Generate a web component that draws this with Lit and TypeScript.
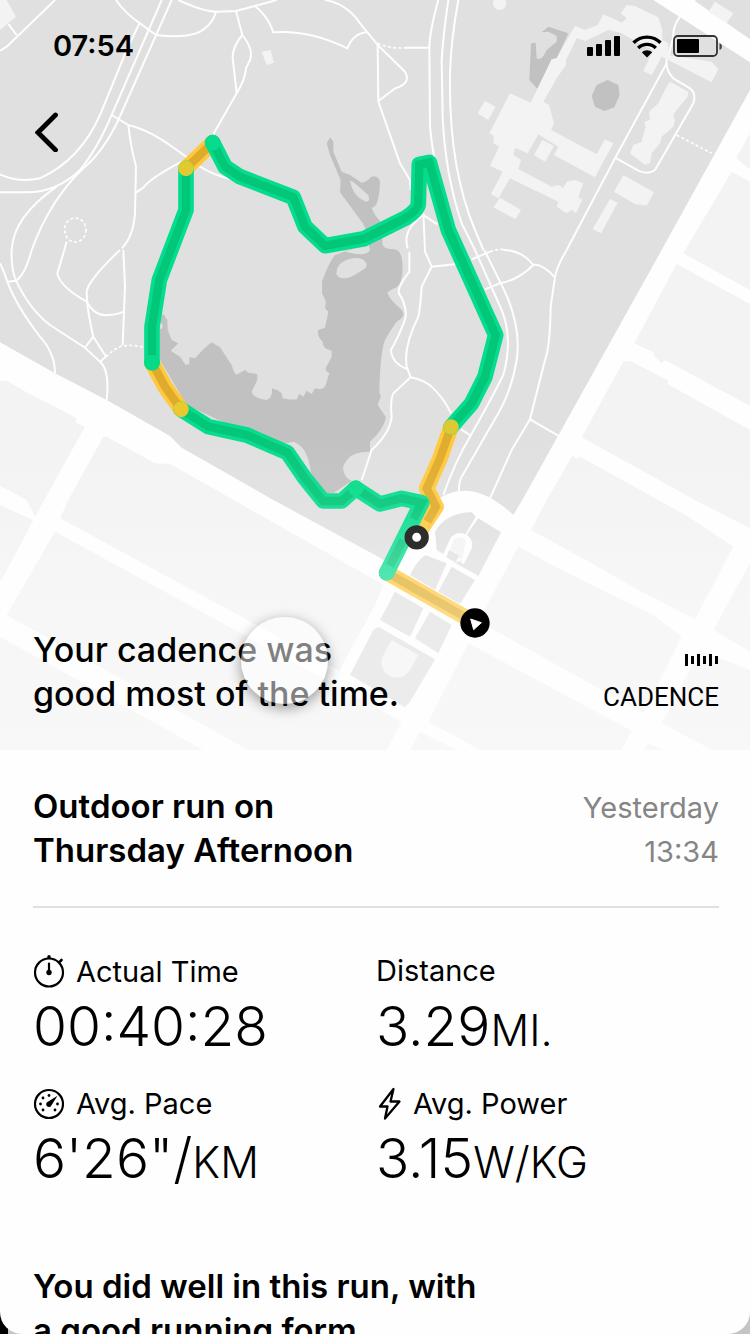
import { LitElement, html, svg, css } from "lit";
import { customElement } from "lit/decorators.js";

/* The map canvas is 2250 x 2250 units; sheets are grouped by their origin. */

const PARK =
  "M0 0H1960L2250 187V270L1985 750L1567 1500L1540 1545Q1465 1475 1400 1472Q1340 1470 1300 1510L1240 1620L1150 1680L1125 1665L820 1500L545 1343L510 1308L320 1200L165 1120L0 1027Z M2080 0L2250 118V0Z";

const BLOCKS = [
  "2208 475 2250 400 2250 507",
  "2195 515 2250 545 2250 870 2050 760",
  "2030 792 2250 912 2250 1218 1995 1080 1985 1090 1960 1065 1963 1058 1903 1030",
  "1870 1085 1890 1082 2005 1142 2003 1152 2250 1290 2250 1585 2085 1500 1745 1312",
  "1717 1368 1730 1376 1740 1370 1975 1500 2065 1550 2200 1640 2085 1858 1915 1770 1775 1690 1593 1590 1640 1500",
  "2250 1690 2140 1890 2250 1955",
  "1555 1640 1695 1715 1960 1845 2045 1910 1930 2140 1465 1880 1450 1835",
  "2250 2010 2100 1950 1985 2170 2250 2310",
  "1405 1930 1895 2192 1865 2250 1440 2250 1285 2165",
  "1260 2195 1370 2250 1230 2250",
  "1945 2230 1990 2250 1930 2250",
  "165 1595 275 1655 1125 2120 1205 2165 1160 2250 745 2250 20 1845",
  "0 1910 610 2250 0 2250",
  "320 1310 465 1390 510 1392 1125 1740 1150 1755 1125 1815 1018 2012 760 1870 180 1555 205 1500 310 1310",
  "0 1142 20 1142 85 1180 150 1212 230 1255 228 1268 255 1280 105 1550 80 1500 0 1457",
  "0 1515 100 1560 5 1740 0 1740",
];

const PLAZA = [
  "M185 150L180 95Q215 37 290 37L302 50L270 105L245 100L225 120L205 162Z",
  "M310 55L378 97L310 228L240 188L265 180L290 130L275 105Z",
  "M150 165L215 190L180 270L105 225Q120 190 150 165Z",
  "M230 200L300 240L255 312L190 275Z",
  "M60 275L145 325L105 410L15 360Z",
  "M165 335L230 375L190 460L120 415Z",
  "M10 380L180 478L105 605L90 622L-75 525L-5 390Z",
];

const LAKE =
  "M990 412L1000 425V455L1025 515L1050 525L1085 548Q1100 547 1112 532Q1130 522 1140 543Q1140 580 1130 612Q1124 622 1115 623Q1122 645 1142 665L1148 735Q1155 748 1175 747Q1202 745 1206 780Q1213 840 1190 862Q1170 870 1162 878Q1170 900 1200 925Q1225 945 1190 965Q1165 1000 1155 1020Q1140 1060 1138 1180L1143 1187L1133 1215L1158 1252Q1150 1290 1110 1325V1355Q1070 1355 1050 1370Q1025 1395 1030 1410Q1035 1435 1055 1442L1000 1480H970L933 1420Q925 1340 880 1325L860 1330L740 1300L560 1215L480 1080V950L490 942L502 960L503 990L515 1020L535 1030L512 1052L540 1070L557 1095L568 1092V1072L585 1075L610 1048L635 1027L660 1042L695 1095Q705 1130 712 1123L735 1110L745 1118L772 1122V1140L755 1175Q760 1195 800 1200Q820 1190 815 1165L832 1170L845 1180L848 1195Q870 1200 890 1198L898 1182L910 1190L920 1172L935 1182L945 1165Q970 1172 977 1155L988 1120Q970 1110 982 1095L995 1070V1052Q965 1045 968 1025Q950 1010 955 990L975 983L985 935L975 925L978 905L966 880V845Q985 790 1005 765L1115 725L1090 672L1020 577L1022 540L990 465L980 430Z";

const ISLANDS =
  "M1050 541Q1060 544 1105 586Q1112 604 1098 605Q1058 590 1050 541Z M1010 825Q1005 790 1045 778Q1090 765 1100 793Q1103 805 1075 818Q1030 848 1010 825Z M480 965Q493 975 485 987L478 985Z M1035 755Q1100 772 1110 750L1105 730Z";

const NORTH_WEST = [
  "M165 0L20 140L0 153M50 105L25 72",
  "M348 0Q375 40 420 70L468 105Q580 118 615 85Q640 65 648 35",
  "M485 0L335 345Q290 450 240 510Q170 577 80 577H0",
  "M515 0L355 360Q310 455 250 505Q150 600 95 750",
  "M418 70L380 150L300 345Q240 480 120 535Q60 550 0 523",
  "M170 560Q40 650 35 750",
  "M335 345L385 375Q450 390 530 450L600 500Q640 525 690 537",
  "M385 375Q390 430 408 500L405 640Q400 710 365 745",
  "M408 578L430 563Q450 535 545 485",
  "M535 0Q610 35 650 35L708 33L765 18L830 0",
  "M765 18Q805 50 820 97Q930 90 1042 145Q1060 100 1100 97",
  "M975 0Q1040 10 1080 70L1135 137",
  "M708 33L727 105Q762 150 750 180L738 205Q735 240 710 280L640 403",
  "M727 105Q690 150 700 190L710 280",
  "M200 725L193 750",
];
const WEST = [
  "M0 40Q15 70 22 95Q50 170 120 260Q165 310 165 370",
  "M95 0Q75 75 48 92L22 95",
  "M35 0Q33 60 48 92Q90 180 150 225L255 293L300 335Q330 360 320 450",
  "M193 0L172 70Q180 110 260 155Q285 200 325 195Q350 195 370 185",
  "M360 0Q265 90 260 125L262 165Q270 220 280 260L318 320L300 335M280 260L255 293",
  "M370 0L375 110L368 285",
];
const NORTH_EAST = [
  "M190 0Q165 90 163 140L165 380Q172 450 180 480",
  "M220 0Q205 100 200 180L203 350Q210 520 260 670L300 750",
  "M250 0Q228 120 225 220Q220 500 300 690L325 750",
  "M95 143H163M8 135L10 305L75 490L105 540L107 570",
  "M8 135L90 215Q110 250 60 265L10 303",
  "M145 640L150 750M145 645Q80 690 98 745M145 645L187 673",
  "M875 190L720 475L575 750",
  "M875 175Q870 210 895 235L945 265Q965 280 955 310L840 510Q820 525 790 512L720 473",
  "M915 50Q893 80 895 110L880 170M960 0L950 12",
];
const EAST = [
  "M300 0L380 180Q415 265 385 375Q345 455 285 560Q240 635 205 735",
  "M328 0L385 115Q440 230 425 330Q410 420 370 490L260 680Q250 700 252 730",
  "M103 5V65Q65 115 72 130Q95 165 92 200Q85 230 48 300Q50 340 97 357",
  "M148 0L170 50L140 110Q135 180 130 200Q85 290 95 350L107 382L55 430Q45 450 50 500Q45 550 -10 600L-40 690",
  "M170 50L240 43M290 28L345 5M107 382Q150 390 175 415Q210 450 228 490M258 538L285 555",
  "M330 118L375 100Q430 90 475 45Q440 0 385 0M475 45Q500 40 540 82",
  "M575 0Q545 50 540 82L527 170Q525 290 510 330L465 508L410 600L345 745M465 508L555 560",
];

const BUILDINGS = [
  "600 77 630 90 668 75 685 43 712 55 740 68 755 55 737 40 755 15 780 18 850 52 862 90 862 120 880 130 880 165 1010 185 1030 208 1010 247 880 180 860 170 830 226 805 213 835 150 800 135 740 100 700 90 632 122 605 115 573 180 573 195 545 235 505 305 522 315 537 370 528 390 665 463 690 418 715 430 660 532 537 465 550 440 490 403 458 460 420 443 415 465 438 480 430 507 530 560 550 555 565 565 575 545 600 540 625 550 610 590 622 600 603 640 590 630 575 640 545 620 550 605 405 535 370 595 348 582 383 515 345 497 372 440 355 430 357 408 343 400 405 280 467 308 530 178 545 175",
  "477 465 502 420 537 438 510 485",
  "330 303 362 320 340 360 308 340",
  "375 593 438 630 422 658 355 622",
  "745 525 837 577 815 617 780 612 717 575",
  "705 597 728 608 678 700 653 687",
  "885 245 940 275 938 290 905 330 895 345 900 360 895 380 860 410 855 430 830 460 825 490 810 495 765 460 775 435 800 425 812 380 808 365 825 360 822 335 850 310 872 265",
  "1020 5 1075 40 1055 70 1000 35",
  "-340 155 -313 150 -303 188 -325 195",
  "-1125 0 -1105 0 -1077 50 -1125 90",
];

const GREEN = [
  "M638 428L675 500L720 530L880 592L915 680L975 737L1092 716L1215 655Q1255 630 1255 610L1258 493L1288 487L1345 690L1487 1005L1455 1130L1415 1210L1353 1281",
  "M558 505V630L478 840L456 980V1088",
  "M543 1228L625 1280L740 1305L862 1358L915 1435L970 1503H1025L1067 1465",
  "M1067 1465L1140 1512L1205 1495L1265 1508L1160 1718",
];
const GREEN_CORE = [
  ...GREEN.slice(0, 3),
  "M1067 1465L1140 1512L1205 1495L1265 1508L1241 1557",
  "M1209 1620L1170 1698",
];
const YELLOW = [
  "M558 505L638 428",
  "M1353 1281L1320 1375L1280 1466L1308 1520L1252 1605",
  "M456 1088L495 1160L543 1228",
  "M1160 1718L1425 1868",
];
const YELLOW_CORE = [
  YELLOW[0],
  "M1353 1281L1320 1375L1280 1466L1308 1520L1282 1565",
  YELLOW[2],
  YELLOW[3],
];
const TURNS = [
  [558, 505, "#dfca31"],
  [638, 428, "#05dc8e"],
  [456, 1088, "#05db87"],
  [543, 1228, "#e9c830"],
  [1067, 1465, "#03dc88"],
  [1353, 1281, "#dbca33"],
  [1160, 1718, "#0edc91"],
] as const;

const lines = (paths: string[], cls: string) =>
  paths.map((d) => svg`<path class=${cls} d=${d} />`);
const shapes = (points: string[], cls: string) =>
  points.map((p) => svg`<polygon class=${cls} points=${p} />`);

@customElement("run-map")
export class RunMap extends LitElement {
  static styles = css`
    :host { display: block; }
    svg { display: block; width: 100%; height: 100%; }
    .park { fill: #e0e0e0; }
    .block, .building { fill: #f3f3f3; }
    .lake { fill: #c1c1c1; }
    .path { fill: none; stroke: #fefefe; stroke-width: 6; }
    .lane { fill: none; stroke: #fefefe; stroke-width: 10; }
    .dash { fill: none; stroke: #fefefe; stroke-width: 5; stroke-dasharray: 9 7; }
    .route { fill: none; stroke-width: 47; stroke-linejoin: round; stroke-linecap: round; }
    .core { fill: none; stroke-width: 25; stroke-linejoin: miter; }
    .green { stroke: #05dc8e; }
    .green-core { stroke: #02c678; }
    .yellow { stroke: #fec93c; }
    .yellow-core { stroke: #dfab2a; }
  `;

  render() {
    return html`
      <svg viewBox="0 0 2250 2250" preserveAspectRatio="xMidYMid slice" role="img" aria-label="Map of the run">
        <defs>
          <linearGradient id="fade" x1="0" y1="0" x2="0" y2="1">
            <stop offset="0.57" stop-color="#fefefe" stop-opacity="0" />
            <stop offset="0.68" stop-color="#fefefe" stop-opacity="0.09" />
            <stop offset="0.75" stop-color="#fefefe" stop-opacity="0.25" />
            <stop offset="0.82" stop-color="#fefefe" stop-opacity="0.35" />
            <stop offset="1" stop-color="#fefefe" stop-opacity="0.42" />
          </linearGradient>
        </defs>
        <rect width="2250" height="2250" fill="#fefefe" />
        <path class="park" d=${PARK} />
        ${shapes(BLOCKS, "block")}
        <g transform="translate(1125 1500)">
          <path fill="#fefefe" d="M165 30L200 -8L240 0L300 30L180 200L60 170Z" />
          ${lines(PLAZA, "park")}
          <path class="block" d="M222 160L236 118Q255 105 273 120L262 180Z" />
          <path class="park" d="M222 150L252 167L242 188L214 172Z" />
          <path class="block" d="M50 420L130 465L105 510Q85 540 50 530Q15 515 20 475Z" />
          <path class="lane" d="M208 170L232 115Q250 98 275 110Q292 125 285 145L262 190" />
        </g>
        <path class="lake" d=${LAKE} />
        <path class="park" d=${ISLANDS} />
        ${lines(NORTH_WEST, "path")}
        <ellipse class="dash" cx="226" cy="690" rx="32" ry="36" />
        <g transform="translate(0 750)">
          ${lines(WEST, "path")}
          <path class="dash" d="M318 320Q350 290 368 288Q400 283 432 293" />
        </g>
        <g transform="translate(1125 0)">
          <path class="lake" d="M500 97L520 80L580 100L545 175L530 178L488 267L463 240L468 130L482 128L485 175Q500 185 515 150L545 125V108L520 95Z" />
          <path class="lake" d="M650 288L665 255L698 240L730 255L734 285L718 322L688 333L660 320Z" />
          ${lines(NORTH_EAST, "path")}
          <path class="dash" d="M8 130Q50 148 95 143M905 405L1010 460" />
          ${shapes(BUILDINGS, "building")}
          <circle class="building" cx="374" cy="10" r="20" />
        </g>
        <g transform="translate(1125 750)">
          ${lines(EAST, "path")}
          <path class="dash" d="M345 5Q370 -5 395 0" />
        </g>
        <circle cx="1262" cy="1623" r="46" fill="#fefefe" />
        ${lines(YELLOW, "route yellow")}
        ${lines(YELLOW_CORE, "core yellow-core")}
        ${lines(GREEN, "route green")}
        ${lines(GREEN_CORE, "core green-core")}
        ${TURNS.map(([x, y, fill]) => svg`<circle cx=${x} cy=${y} r="23.5" fill=${fill} />`)}
        <rect width="2250" height="2250" fill="url(#fade)" />
        <circle cx="1250" cy="1612" r="25" fill="#fff" stroke="#2d2d2d" stroke-width="23" />
        <circle cx="1425" cy="1869" r="44" fill="#000" />
        <path d="M1412 1857L1444 1868L1421 1889Z" fill="#fff" stroke="#fff" stroke-width="3" stroke-linejoin="round" />
      </svg>
    `;
  }
}

const iconWatch = html`<svg class="icon" viewBox="0 0 32 34" aria-hidden="true">
  <circle cx="16" cy="17.500" r="14" fill="none" stroke="#000" stroke-width="2.200" />
  <path d="M14.300 3v-1.200a1.700 1.700 0 0 1 3.400 0V3Z" />
  <path d="M27 6.500l1.500-1.500" fill="none" stroke="#000" stroke-width="2.600" stroke-linecap="round" />
  <path d="M16 8.500v8" stroke="#000" stroke-width="2.200" stroke-linecap="round" />
  <circle cx="16" cy="17.500" r="2.700" />
</svg>`;

const iconGauge = html`<svg class="icon" viewBox="0 0 32 34" aria-hidden="true">
  <circle cx="16" cy="17" r="14" fill="none" stroke="#000" stroke-width="2.200" />
  <path d="M24.500 8.800L18.200 18.700a2.700 2.700 0 1 1-3.700-3.700Z" />
  <circle cx="7.500" cy="17" r="1.400" /><circle cx="10" cy="11" r="1.400" /><circle cx="16" cy="8.500" r="1.400" />
  <circle cx="24.500" cy="17" r="1.400" /><circle cx="22" cy="23" r="1.400" /><circle cx="10" cy="23" r="1.400" />
</svg>`;

const iconBolt = html`<svg class="icon bolt" viewBox="0 0 26 34" aria-hidden="true">
  <path d="M17.500 2L4 19.500h7.500L9 31.500L23.500 14.500H14.500Z" fill="none" stroke="#000" stroke-width="2.300" stroke-linejoin="round" />
</svg>`;

const STATS = [
  { icon: iconWatch, label: "Actual Time", value: "00:40:28", unit: "" },
  { icon: null, label: "Distance", value: "3.29", unit: "MI." },
  { icon: iconGauge, label: "Avg. Pace", value: "6'26\"/", unit: "KM" },
  { icon: iconBolt, label: "Avg. Power", value: "3.15", unit: "W/KG" },
];

@customElement("app-root")
export class AppRoot extends LitElement {
  static styles = css`
    :host {
      display: block;
      height: 100vh;
      overflow: hidden;
      background: linear-gradient(90deg, #000 0 8px, #c4c4c4 8px);
      color: #000;
      font-family: Inter, "Liberation Sans", sans-serif;
    }
    * { box-sizing: border-box; }
    h1, h2, p, dl, dd, dt { margin: 0; }
    .screen {
      height: 100%;
      overflow: hidden;
      background: #fefefe;
      border-radius: 0 0 22px 22px;
    }
    .hero {
      position: relative;
      display: flex;
      flex-direction: column;
      aspect-ratio: 1;
    }
    .map { position: absolute; inset: 0; }
    .status, .back, .caption { position: relative; }
    .status {
      display: flex;
      align-items: center;
      justify-content: space-between;
      padding: 26px 28px 0 53px;
    }
    .clock { font-size: 29px; line-height: 40px; font-weight: 600; }
    .signals { display: flex; align-items: center; gap: 11px; }
    .signals svg { display: block; }
    .back {
      width: 48px;
      height: 60px;
      margin: 36px 0 0 24px;
      padding: 0;
      border: 0;
      background: none;
      cursor: pointer;
    }
    .back svg { display: block; margin: auto; }
    .caption {
      display: flex;
      align-items: flex-end;
      justify-content: space-between;
      margin-top: auto;
      padding: 0 31px 34px 33px;
    }
    .lead { font-size: 34px; line-height: 44px; font-weight: 500; }
    .metric {
      display: flex;
      flex-direction: column;
      align-items: flex-end;
      gap: 15px;
      font: 400 26px/32px Roboto, sans-serif;
      padding-bottom: 3px;
    }
    .touch {
      position: absolute;
      left: 241px;
      top: 617px;
      width: 87px;
      height: 87px;
      border-radius: 50%;
      background: rgba(255, 255, 255, 0.5);
      box-shadow: 0 4px 14px rgba(0, 0, 0, 0.4);
    }
    .details { padding: 34px 31px 0 33px; }
    .summary {
      display: flex;
      justify-content: space-between;
      padding-bottom: 32px;
      border-bottom: 2px solid #e0e0e0;
    }
    .title { font-size: 33px; line-height: 44px; font-weight: 600; }
    .when {
      padding-top: 2px;
      font-size: 29px;
      line-height: 44px;
      color: #858585;
      text-align: right;
    }
    .stats {
      display: grid;
      grid-template-columns: 1fr 1fr;
      row-gap: 24px;
      padding: 46px 0 70px;
    }
    .label {
      display: flex;
      gap: 11px;
      min-height: 36px;
      font-size: 29px;
      line-height: 34px;
    }
    .label.with-icon { align-items: center; }
    .icon { width: 32px; height: 34px; }
    .bolt { width: 26px; }
    .value { font-size: 55px; line-height: 72px; font-weight: 300; white-space: nowrap; }
    .unit { font-size: 43px; line-height: 44px; }
  `;

  render() {
    return html`
      <main class="screen">
        <header class="hero">
          <run-map class="map"></run-map>
          <div class="status">
            <time class="clock">07:54</time>
            <div class="signals">
              <svg width="34" height="20" viewBox="0 0 34 20" role="img" aria-label="Signal">
                <path d="M1 11h4a1 1 0 0 1 1 1v7a1 1 0 0 1-1 1H1a1 1 0 0 1-1-1v-7a1 1 0 0 1 1-1ZM10 8h4a1 1 0 0 1 1 1v10a1 1 0 0 1-1 1h-4a1 1 0 0 1-1-1V9a1 1 0 0 1 1-1ZM19 4h4a1 1 0 0 1 1 1v14a1 1 0 0 1-1 1h-4a1 1 0 0 1-1-1V5a1 1 0 0 1 1-1ZM28 0h4a1 1 0 0 1 1 1v18a1 1 0 0 1-1 1h-4a1 1 0 0 1-1-1V1a1 1 0 0 1 1-1Z" />
              </svg>
              <svg width="30" height="23" viewBox="0 0 30 23" role="img" aria-label="Wi-Fi">
                <path d="M1.500 7.800a19 19 0 0 1 27 0M6.200 13a12.500 12.500 0 0 1 17.600 0" fill="none" stroke="#000" stroke-width="3.400" />
                <path d="M15 22.500L9.800 17.300a7.400 7.400 0 0 1 10.400 0Z" />
              </svg>
              <svg width="49" height="22" viewBox="0 0 49 22" role="img" aria-label="Battery">
                <rect x="1" y="1" width="43" height="20" rx="4" fill="none" stroke="#333" stroke-width="1.800" />
                <rect x="4" y="4" width="22" height="14" rx="1" />
                <path d="M46.500 8q2.500 1 2.500 3.500t-2.500 3.500Z" fill="#444" />
              </svg>
            </div>
          </div>
          <button class="back" aria-label="Back">
            <svg width="26" height="40" viewBox="0 0 26 40">
              <path d="M20.500 3L3 20.500L20.500 38" fill="none" stroke="#000" stroke-width="4.800" stroke-linecap="round" />
            </svg>
          </button>
          <div class="caption">
            <h1 class="lead">Your cadence was<br />good most of the time.</h1>
            <div class="metric">
              <svg width="34" height="12" viewBox="0 0 34 12" aria-hidden="true">
                <path d="M0 0h3v12H0zM6 2h3v8H6zM12 0h3v12h-3zM18 2h3v8h-3zM24 0h3v12h-3zM30 2h3v8h-3z" />
              </svg>
              <span>CADENCE</span>
            </div>
          </div>
          <div class="touch"></div>
        </header>
        <section class="details">
          <div class="summary">
            <h2 class="title">Outdoor run on<br />Thursday Afternoon</h2>
            <p class="when">Yesterday<br />13:34</p>
          </div>
          <dl class="stats">
            ${STATS.map(
              (s) => html`<div>
                <dt class=${s.icon ? "label with-icon" : "label"}>${s.icon}<span>${s.label}</span></dt>
                <dd class="value">${s.value}<span class="unit">${s.unit}</span></dd>
              </div>`
            )}
          </dl>
          <h2 class="title">You did well in this run, with<br />a good running form.</h2>
        </section>
      </main>
    `;
  }
}
